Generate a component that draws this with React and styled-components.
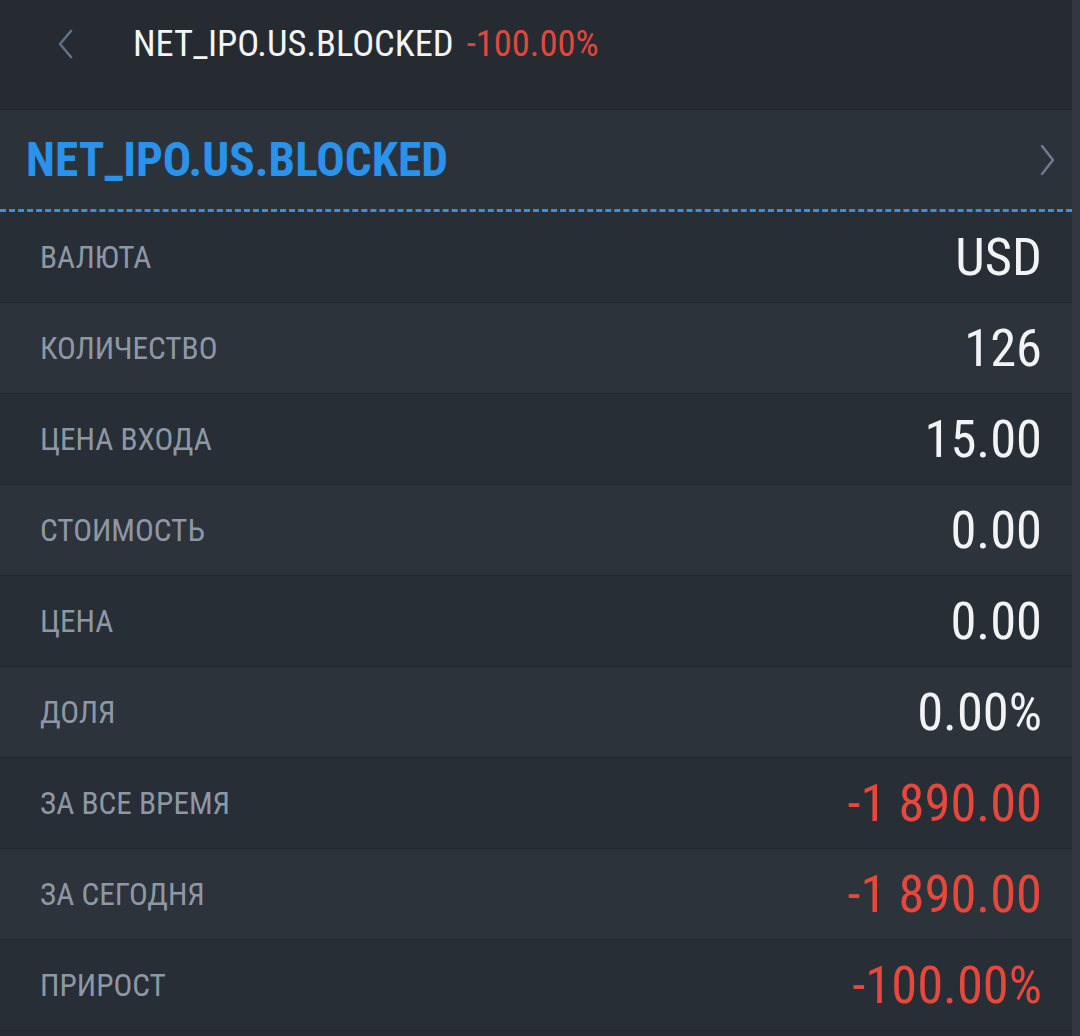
import React from "react";
import styled, { createGlobalStyle } from "styled-components";

const Global = createGlobalStyle`
  html, body { margin: 0; padding: 0; background: #262b32; }
  body { font-family: "Roboto Condensed", "Roboto", "Liberation Sans", sans-serif; font-stretch: condensed; }
`;

const Page = styled.div`
  display: flex;
  width: 1080px;
  height: 1036px;
  overflow: hidden;
  background: #262b32;
`;

const Main = styled.div`
  flex: 1;
  display: flex;
  flex-direction: column;
`;

const Track = styled.div`
  width: 8px;
  background: #33383e;
`;

const Header = styled.div`
  height: 110px;
  display: flex;
  align-items: center;
  padding-bottom: 22px;
  background: #262b32;
  box-sizing: border-box;
  border-bottom: 1px solid #20242a;
`;

const Back = styled.div`
  width: 133px;
  display: flex;
  justify-content: flex-start;
  padding-left: 55px;
  box-sizing: border-box;
`;

const HeaderTitle = styled.span`
  font-size: 36.5px;
  color: #f4f5f6;
`;

const HeaderChange = styled.span`
  font-size: 36.5px;
  color: #e0483d;
  margin-left: 13px;
`;

const TitleRow = styled.div`
  height: 102px;
  display: flex;
  align-items: center;
  justify-content: space-between;
  padding: 0 14px 0 26px;
  background: #2c323a;
  border-bottom: 3px dashed #3a8fd8;
  box-sizing: border-box;
`;

const Ticker = styled.span`
  font-size: 47.3px;
  font-weight: 700;
  color: #2a92ea;
`;

const Row = styled.div`
  height: 91px;
  flex-shrink: 0;
  display: flex;
  align-items: center;
  justify-content: space-between;
  padding: 0 38px 0 40px;
  box-sizing: border-box;
  background: ${(p) => (p.$alt ? "#2d333b" : "#282e36")};
  border-bottom: 1px solid #23282e;
`;

const Label = styled.span`
  font-size: 31.3px;
  color: #8d98a4;
`;

const Value = styled.span`
  font-size: 52.5px;
  color: ${(p) => (p.$neg ? "#e6483c" : "#f2f3f5")};
  margin-right: -8px;
`;

const rows = [
  ["ВАЛЮТА", "USD"],
  ["КОЛИЧЕСТВО", "126"],
  ["ЦЕНА ВХОДА", "15.00"],
  ["СТОИМОСТЬ", "0.00"],
  ["ЦЕНА", "0.00"],
  ["ДОЛЯ", "0.00%"],
  ["ЗА ВСЕ ВРЕМЯ", "-1 890.00", true],
  ["ЗА СЕГОДНЯ", "-1 890.00", true],
  ["ПРИРОСТ", "-100.00%", true],
];

export default function App() {
  return (
    <>
      <Global />
      <Page>
        <Main>
          <Header>
            <Back>
              <svg width="22" height="32" viewBox="0 0 22 32" fill="none">
                <path d="M16 3 L5 16 L16 29" stroke="#5f7187" strokeWidth="2.6" strokeLinecap="round" strokeLinejoin="round" />
              </svg>
            </Back>
            <HeaderTitle>NET_IPO.US.BLOCKED</HeaderTitle>
            <HeaderChange>-100.00%</HeaderChange>
          </Header>
          <TitleRow>
            <Ticker>NET_IPO.US.BLOCKED</Ticker>
            <svg width="20" height="32" viewBox="0 0 20 32" fill="none">
              <path d="M4 2 L15 16 L4 30" stroke="#6c7b8f" strokeWidth="2.5" strokeLinecap="round" strokeLinejoin="round" />
            </svg>
          </TitleRow>
          {rows.map(([l, v, neg], i) => (
            <Row key={l} $alt={i % 2 === 1}>
              <Label>{l}</Label>
              <Value $neg={neg}>{v}</Value>
            </Row>
          ))}
        </Main>
        <Track />
      </Page>
    </>
  );
}
